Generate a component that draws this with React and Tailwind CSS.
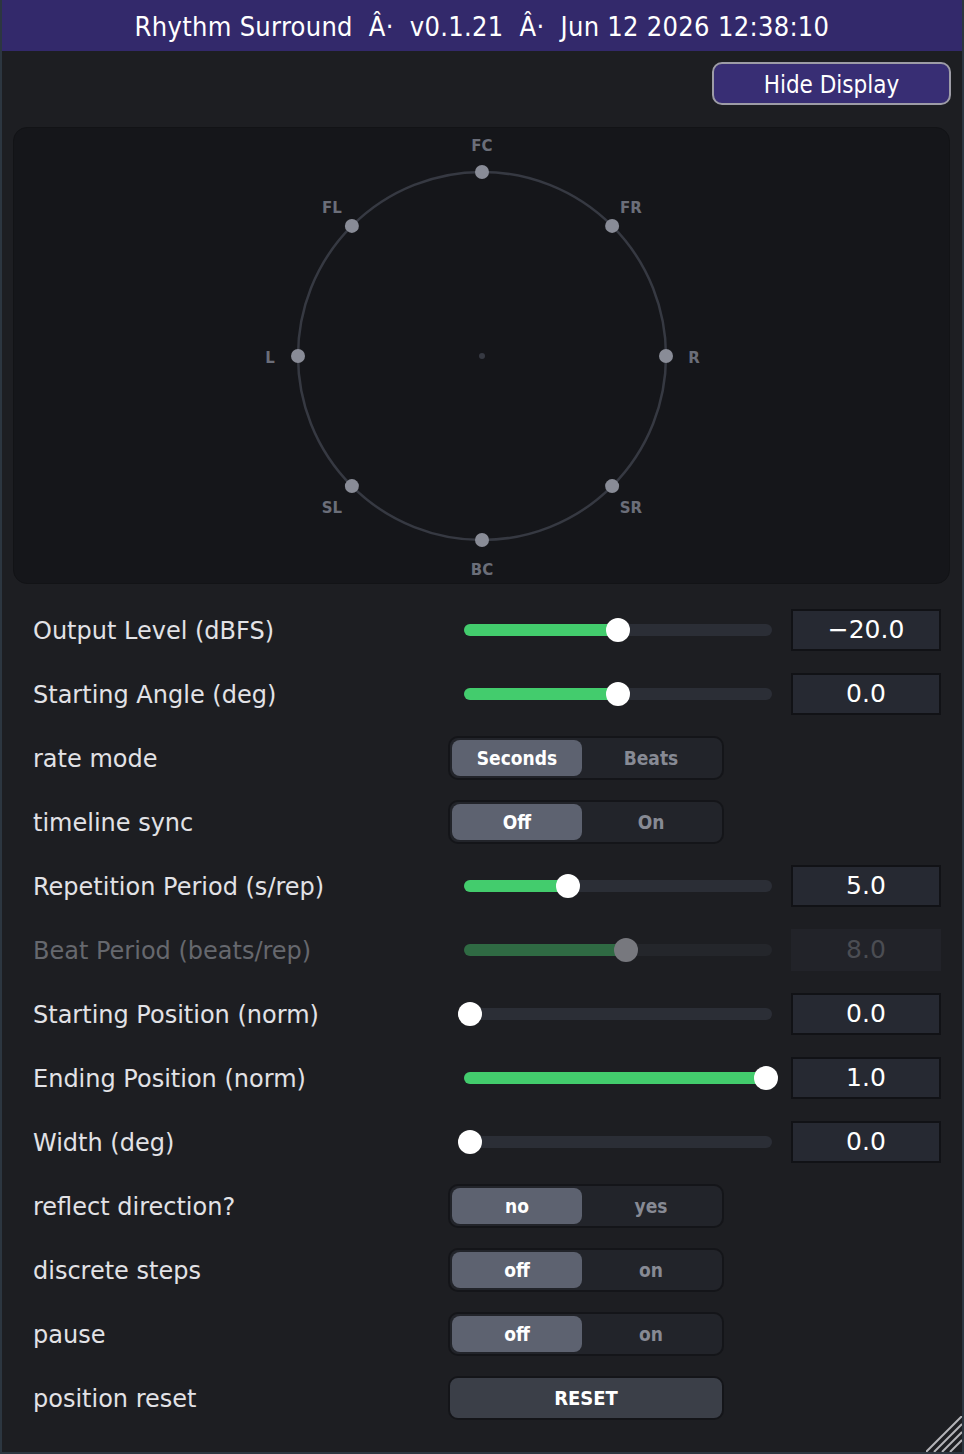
import React from "react";

const FONT = { fontFamily: '"DejaVu Sans", "Open Sans", sans-serif' };
const COND = { fontFamily: '"DejaVu Sans Condensed", "Liberation Sans Narrow", "DejaVu Sans", sans-serif', fontStretch: "condensed" };

function Slider({ value, disabled }) {
  const thumbX = 6 + value * 296;
  return (
    <div className="relative w-[308px] h-[24px] ml-[16px]">
      <div className={`absolute left-0 right-0 top-[6px] h-[12px] rounded-full ${disabled ? "bg-[#24262b]" : "bg-[#2b2e36]"}`} />
      <div
        className={`absolute left-0 top-[6px] h-[12px] rounded-full ${disabled ? "bg-[#2f6a43]" : "bg-[#43cc6d]"}`}
        style={{ width: thumbX }}
      />
      <div
        className={`absolute top-0 w-[24px] h-[24px] rounded-full ${disabled ? "bg-[#77787e]" : "bg-white"}`}
        style={{ left: thumbX - 12 }}
      />
    </div>
  );
}

function ValueBox({ text, disabled }) {
  return (
    <div
      className={`ml-[19px] w-[150px] h-[42px] flex items-center justify-center text-[25px] ${
        disabled ? "bg-[#222329] text-[#4b4d53]" : "bg-[#262932] text-white border-2 border-[#111216]"
      }`}
    >
      {text}
    </div>
  );
}

function Segmented({ a, b }) {
  return (
    <div className="w-[276px] h-[44px] rounded-[10px] bg-[#22242a] border-2 border-[#141519] p-[2px] flex font-bold text-[19px]" style={COND}>
      <div className="w-[130px] h-full rounded-[8px] bg-[#5d6270] text-white flex items-center justify-center">{a}</div>
      <div className="flex-1 text-[#878a94] flex items-center justify-center">{b}</div>
    </div>
  );
}

function Row({ label, disabled, children }) {
  return (
    <div className="h-[64px] flex items-center">
      <div className={`w-[415px] text-[24px] pt-[1px] ${disabled ? "text-[#66686e]" : "text-[#e2e2e6]"}`}>{label}</div>
      <div className="flex items-center">{children}</div>
    </div>
  );
}

function SurroundDisplay() {
  const cx = 468, cy = 228, r = 184;
  const pts = [
    { n: "FC", a: 0, lx: 468, ly: 18 },
    { n: "FR", a: 45, lx: 617, ly: 80 },
    { n: "R", a: 90, lx: 680, ly: 230 },
    { n: "SR", a: 135, lx: 617, ly: 380 },
    { n: "BC", a: 180, lx: 468, ly: 442 },
    { n: "SL", a: 225, lx: 318, ly: 380 },
    { n: "L", a: 270, lx: 256, ly: 230 },
    { n: "FL", a: 315, lx: 318, ly: 80 },
  ];
  return (
    <svg width="935" height="455" viewBox="0 0 935 455" className="block">
      <circle cx={cx} cy={cy} r={r} fill="none" stroke="#363942" strokeWidth="2.5" />
      <circle cx={cx} cy={cy} r="3" fill="#363942" />
      {pts.map((p) => {
        const rad = (p.a * Math.PI) / 180;
        const x = cx + r * Math.sin(rad);
        const y = cy - r * Math.cos(rad);
        return (
          <g key={p.n}>
            <circle cx={x} cy={y} r="7" fill="#898c97" />
            <text
              x={p.lx}
              y={p.ly}
              textAnchor="middle"
              dominantBaseline="central"
              fill="#6b6e79"
              fontSize="15"
              fontWeight="bold"
              fontFamily='"DejaVu Sans", sans-serif'
            >
              {p.n}
            </text>
          </g>
        );
      })}
    </svg>
  );
}

export default function App() {
  return (
    <div className="relative w-[964px] h-[1454px] bg-[#1d1e22] border-x-2 border-b-2 border-[#2c3640] overflow-hidden" style={FONT}>
      <div
        className="h-[51px] pt-[3px] bg-[#33296b] text-white flex items-center justify-center text-[27px] tracking-[0.3px] whitespace-pre"
        style={COND}
      >
        {"Rhythm Surround  Â·  v0.1.21  Â·  Jun 12 2026 12:38:10"}
      </div>
      <div className="flex justify-end pr-[11px] pt-[11px]">
        <button
          className="w-[239px] h-[43px] pt-[2px] rounded-[10px] bg-[#382e74] border-2 border-[#9d9ca6] text-white text-[24px] flex items-center justify-center"
          style={COND}
        >
          Hide Display
        </button>
      </div>
      <div className="mt-[22px] ml-[11px] w-[937px] h-[457px] rounded-[14px] bg-[#15161a] border border-[#121316] overflow-hidden">
        <SurroundDisplay />
      </div>
      <div className="mt-[14px] pl-[31px]">
        <Row label="Output Level (dBFS)">
          <Slider value={0.5} />
          <ValueBox text="−20.0" />
        </Row>
        <Row label="Starting Angle (deg)">
          <Slider value={0.5} />
          <ValueBox text="0.0" />
        </Row>
        <Row label="rate mode">
          <Segmented a="Seconds" b="Beats" />
        </Row>
        <Row label="timeline sync">
          <Segmented a="Off" b="On" />
        </Row>
        <Row label="Repetition Period (s/rep)">
          <Slider value={0.331} />
          <ValueBox text="5.0" />
        </Row>
        <Row label="Beat Period (beats/rep)" disabled>
          <Slider value={0.527} disabled />
          <ValueBox text="8.0" disabled />
        </Row>
        <Row label="Starting Position (norm)">
          <Slider value={0} />
          <ValueBox text="0.0" />
        </Row>
        <Row label="Ending Position (norm)">
          <Slider value={1} />
          <ValueBox text="1.0" />
        </Row>
        <Row label="Width (deg)">
          <Slider value={0} />
          <ValueBox text="0.0" />
        </Row>
        <Row label="reflect direction?">
          <Segmented a="no" b="yes" />
        </Row>
        <Row label="discrete steps">
          <Segmented a="off" b="on" />
        </Row>
        <Row label="pause">
          <Segmented a="off" b="on" />
        </Row>
        <Row label="position reset">
          <button className="w-[276px] h-[44px] rounded-[10px] bg-[#3b3f48] border-2 border-[#141519] text-white font-bold text-[20px] flex items-center justify-center" style={COND}>
            RESET
          </button>
        </Row>
      </div>
      <svg className="absolute right-0 bottom-0" width="36" height="36" viewBox="0 0 36 36">
        {[0, 8, 16, 24].map((o) => (
          <line key={o} x1={36} y1={o} x2={o} y2={36} stroke="#b4b4b8" strokeWidth="2" />
        ))}
      </svg>
    </div>
  );
}
